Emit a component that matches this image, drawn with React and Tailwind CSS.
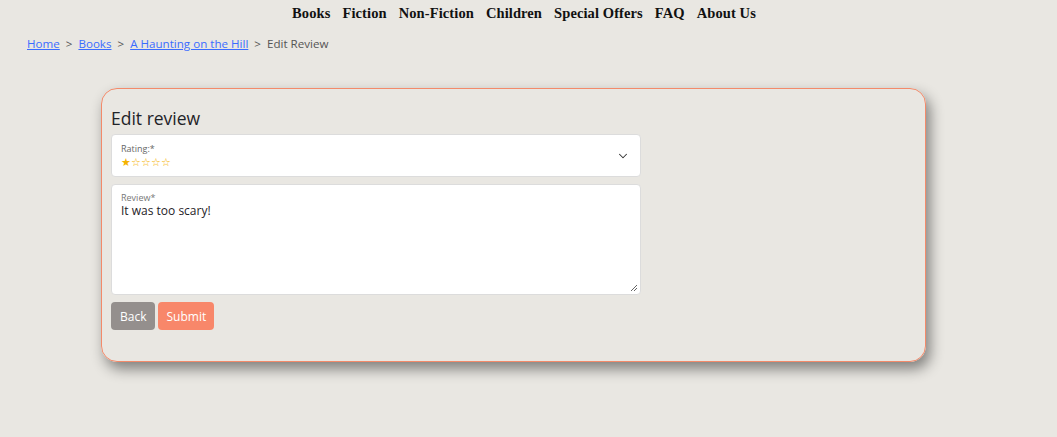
// Edit review page
import { ChevronDown } from 'lucide-react';

const navItems = ['Books', 'Fiction', 'Non-Fiction', 'Children', 'Special Offers', 'FAQ', 'About Us'];

function Stars({ value }) {
  return (
    <div className="flex text-[11px] leading-none text-[#f5b301]">
      {Array.from({ length: 5 }, (_, i) => (
        <span key={i}>{i < value ? '★' : '☆'}</span>
      ))}
    </div>
  );
}

export default function App() {
  return (
    <div className="w-[1057px] h-[437px] bg-[#e9e7e2] font-['Open_Sans',sans-serif] text-[#212529] overflow-hidden">
      <nav className="flex justify-center gap-[12px] pt-[3px] pr-[9px] h-[26px] font-['Liberation_Serif',serif] font-bold text-[14.5px] tracking-[0.1px] text-[#111]">
        {navItems.map((n) => (
          <span key={n}>{n}</span>
        ))}
      </nav>
      <div className="flex items-center gap-[6px] pl-[27px] mt-[9px] text-[11.6px] text-[#555]">
        <a href="#" className="text-[#3b6cff] underline">Home</a>
        <span>&gt;</span>
        <a href="#" className="text-[#3b6cff] underline">Books</a>
        <span>&gt;</span>
        <a href="#" className="text-[#3b6cff] underline">A Haunting on the Hill</a>
        <span>&gt;</span>
        <span>Edit Review</span>
      </div>
      <div className="ml-[101px] mt-[36px] w-[825px] h-[274px] rounded-[16px] border border-[#f38a6a] shadow-[4px_7px_14px_rgba(0,0,0,0.45)] px-[9px] pt-[16px]">
        <h1 className="text-[17.5px] leading-[27px] font-medium text-[#1f2328]">Edit review</h1>
        <div className="mt-[2px] w-[530px] flex flex-col gap-[7px]">
          <div className="h-[43px] bg-white rounded-[4px] border border-[#dcdcdc] flex items-center justify-between pl-[9px] pr-[10px]">
            <div className="flex flex-col gap-[3px]">
              <span className="text-[9px] leading-none text-[#666]">Rating:*</span>
              <Stars value={1} />
            </div>
            <ChevronDown size={14} strokeWidth={1.8} className="text-[#333]" />
          </div>
          <div className="relative h-[111px] bg-white rounded-[4px] border border-[#dcdcdc] pl-[9px] pt-[8px]">
            <div className="text-[9px] leading-none text-[#777]">Review*</div>
            <div className="text-[12px] leading-[16px] text-[#1f2328] mt-[1px]">It was too scary!</div>
            <svg className="absolute right-[2px] bottom-[2px]" width="8" height="8" viewBox="0 0 8 8">
              <path d="M1 7 L7 1 M4 7 L7 4" stroke="#555" strokeWidth="0.9" />
            </svg>
          </div>
          <div className="flex gap-[3px]">
            <button className="h-[28px] px-[9px] pt-[2px] rounded-[4px] bg-[#948f8d] text-white text-[12px]">Back</button>
            <button className="h-[28px] px-[8px] pt-[2px] rounded-[4px] bg-[#f8876a] text-white text-[12px]">Submit</button>
          </div>
        </div>
      </div>
    </div>
  );
}
